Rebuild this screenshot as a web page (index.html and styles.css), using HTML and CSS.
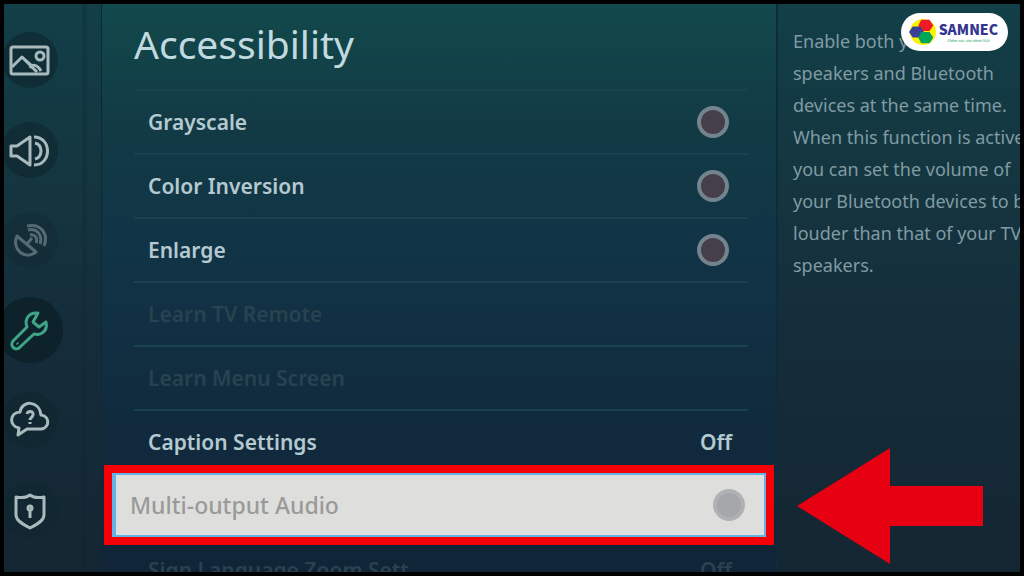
FILE: index.html
```html
<!DOCTYPE html>
<html lang="en">
<head>
<meta charset="utf-8">
<title>Accessibility</title>
<link rel="stylesheet" href="styles.css">
</head>
<body>
<div class="screen">
  <nav class="sidebar" aria-label="Settings categories">
    <button class="category" type="button" aria-label="Picture">
      <svg class="icon" viewBox="0 0 44 44"><rect x="3" y="9" width="37" height="27" rx="2"/><path d="M4 29 14 19 23 27M14 19l15 15M22 30c2-4 7-4 11 3"/><circle cx="32" cy="18" r="4"/></svg>
    </button>
    <button class="category" type="button" aria-label="Sound">
      <svg class="icon" viewBox="0 0 44 44"><path d="M3 18h6l13-9v28L9 28H3zM27 15c8 2 8 14 0 16M26 9c18 0 18 28 0 28"/></svg>
    </button>
    <button class="category dim" type="button" aria-label="Broadcasting">
      <svg class="icon" viewBox="0 0 44 44"><path d="M9 18c-6 13 8 25 19 16zM19 26l5-6M22 17c5-1 8 3 6 8M20 12c9-2 15 5 12 14M19 8c13-3 22 7 17 20"/></svg>
    </button>
    <button class="category current" type="button" aria-label="General" aria-current="page">
      <svg class="icon" viewBox="0 0 44 44"><path d="M30 5c-9-1-14 6-11 14L5 33c-4 5 3 11 7 6l14-13c8 2 14-4 12-12l-7 5-6-5z"/><path d="m9 35 1 1"/></svg>
    </button>
    <button class="category" type="button" aria-label="Support">
      <svg class="icon" viewBox="0 0 44 44"><path d="M11 30l-1 7 9-6h14c9-1 9-13 0-14C31 2 14 2 12 14 1 15 1 28 11 30z"/><path d="M19 16c1-4 7-3 6 1-1 3-3 3-3 5M22 24v2"/></svg>
    </button>
    <button class="category" type="button" aria-label="Privacy">
      <svg class="icon" viewBox="0 0 44 44"><path d="M22 7c4 3 9 3 14 2v18c0 6-8 10-14 13C16 37 8 33 8 27V9c5 1 10 1 14-2z"/><circle cx="22" cy="20" r="2"/><path d="M22 22v8"/></svg>
    </button>
  </nav>

  <main class="panel">
    <h1 class="title">Accessibility</h1>
    <ul class="settings">
      <li class="setting"><label class="row">Grayscale<input class="toggle" type="checkbox"></label></li>
      <li class="setting"><label class="row">Color Inversion<input class="toggle" type="checkbox"></label></li>
      <li class="setting"><label class="row">Enlarge<input class="toggle" type="checkbox"></label></li>
      <li class="setting"><button class="row" type="button" disabled>Learn TV Remote</button></li>
      <li class="setting"><button class="row" type="button" disabled>Learn Menu Screen</button></li>
      <li class="setting"><button class="row" type="button">Caption Settings<span>Off</span></button></li>
      <li class="setting focused"><label class="row">Multi-output Audio<input class="toggle" type="checkbox"></label></li>
      <li class="setting"><button class="row" type="button" disabled>Sign Language Zoom Sett<span>Off</span></button></li>
    </ul>
  </main>

  <aside class="help">
    <p class="help-text">Enable both your<br>speakers and Bluetooth<br>devices at the same time.<br>When this function is active,<br>you can set the volume of<br>your Bluetooth devices to be<br>louder than that of your TV<br>speakers.</p>
  </aside>

  <div class="brand">
    <svg class="brand-mark" viewBox="0 0 30 30"><circle cx="15" cy="15" r="14" fill="#fff200"/><path fill="#ed1c24" d="M13 2h9l4 6-4 6h-9l-3-6z"/><path fill="#3c3f98" d="M4 9h8l4 6-4 6H4l-4-6z"/><path fill="#00a65a" d="M13 15h9l4 6-4 6h-9l-3-6z"/></svg>
    <div class="brand-text"><strong class="brand-name">SAMNEC</strong><span class="brand-line">Chăm sóc cho dành Việt</span></div>
  </div>

  <svg class="arrow" viewBox="0 0 186 118" aria-hidden="true"><path d="M0 59 93 1v38h93v40H93v38z"/></svg>
</div>
</body>
</html>
```
FILE: styles.css
```css
* { box-sizing: border-box; }

body {
  margin: 0;
  background: #000;
  font-family: "Noto Sans", "Open Sans", sans-serif;
}

.screen {
  position: relative;
  display: grid;
  grid-template-columns: 97px 1fr 242px;
  height: 100vh;
  border: 4px solid #000;
  overflow: hidden;
  background: linear-gradient(#123f48, #143640 30%, #152c3a 60%, #142632);
}

.sidebar {
  display: flex;
  flex-direction: column;
  gap: 34px;
  padding-top: 28px;
  background: linear-gradient(90deg, transparent 78px, #0b253466 80px, transparent 84px);
}

.category {
  width: 56px;
  height: 56px;
  margin-left: -2px;
  padding: 6px;
  border: 0;
  border-radius: 50%;
  background: #0f2630a6;
  color: #a9babd;
}

.category.dim { background: #12283266; color: #566a73; }

.category.current {
  background: #0d222b;
  color: #3fa586;
  box-shadow: 0 0 0 5px #0d222b;
}

.icon {
  display: block;
  width: 44px;
  height: 44px;
  fill: none;
  stroke: currentColor;
  stroke-width: 3;
  stroke-linejoin: round;
}

.panel {
  min-height: 0;
  padding: 0 28px 0 32px;
  overflow: hidden;
  border-right: 2px solid #0f2b3a;
  border-left: 1px solid #0b2936;
  background: linear-gradient(#12494c, #123b45 20%, #113346 45%, #112a3d 75%, #112438);
}

.title {
  margin: 0;
  padding-top: 12px;
  height: 85px;
  font-size: 39px;
  line-height: 56px;
  font-weight: 400;
  color: #c0dadf;
}

.settings { margin: 0; padding: 0; list-style: none; }

.setting { height: 64px; border-top: 2px solid #1a424c; }

.row {
  display: flex;
  align-items: center;
  justify-content: space-between;
  width: 100%;
  height: 100%;
  padding: 0 16px 0 14px;
  border: 0;
  background: none;
  color: #b4c9d0;
  font: 600 21px/32px "Noto Sans", "Open Sans", sans-serif;
}

.row:disabled { color: #28424f; }

.toggle {
  appearance: none;
  width: 32px;
  height: 32px;
  margin: 0 3px;
  border: 4px solid #74848f;
  border-radius: 50%;
  background: #453f49;
}

.focused {
  margin: 0 -18px 0 -22px;
  border: 2px solid #62b3e8;
  border-left-width: 4px;
  background: #dedfdd;
  position: relative;
  box-shadow: 0 0 0 8px #f40006;
}

.focused .row { color: #9a9a98; font-size: 23px; font-weight: 500; }
.focused .toggle { border-color: #b0b1b3; background: #a5a7aa; }

.help { padding: 21px 0 0 15px; overflow: hidden; }

.help-text {
  margin: 0;
  font-size: 18px;
  line-height: 32px;
  white-space: nowrap;
  color: #809ba3;
}

.brand {
  position: absolute;
  top: 9px;
  right: 12px;
  display: flex;
  align-items: center;
  gap: 2px;
  height: 38px;
  padding: 0 10px 0 8px;
  border-radius: 19px;
  background: #fff;
}

.brand-mark { width: 28px; height: 28px; }
.brand-text { display: flex; flex-direction: column; align-items: center; }
.brand-name { font: 900 14px/18px "Noto Sans CJK SC", sans-serif; color: #34358f; }
.brand-line { font: italic 4px/6px "Open Sans", sans-serif; color: #169a5b; }

.arrow {
  position: absolute;
  right: 37px;
  bottom: 7px;
  width: 186px;
  height: 118px;
  fill: #e60012;
}
```
